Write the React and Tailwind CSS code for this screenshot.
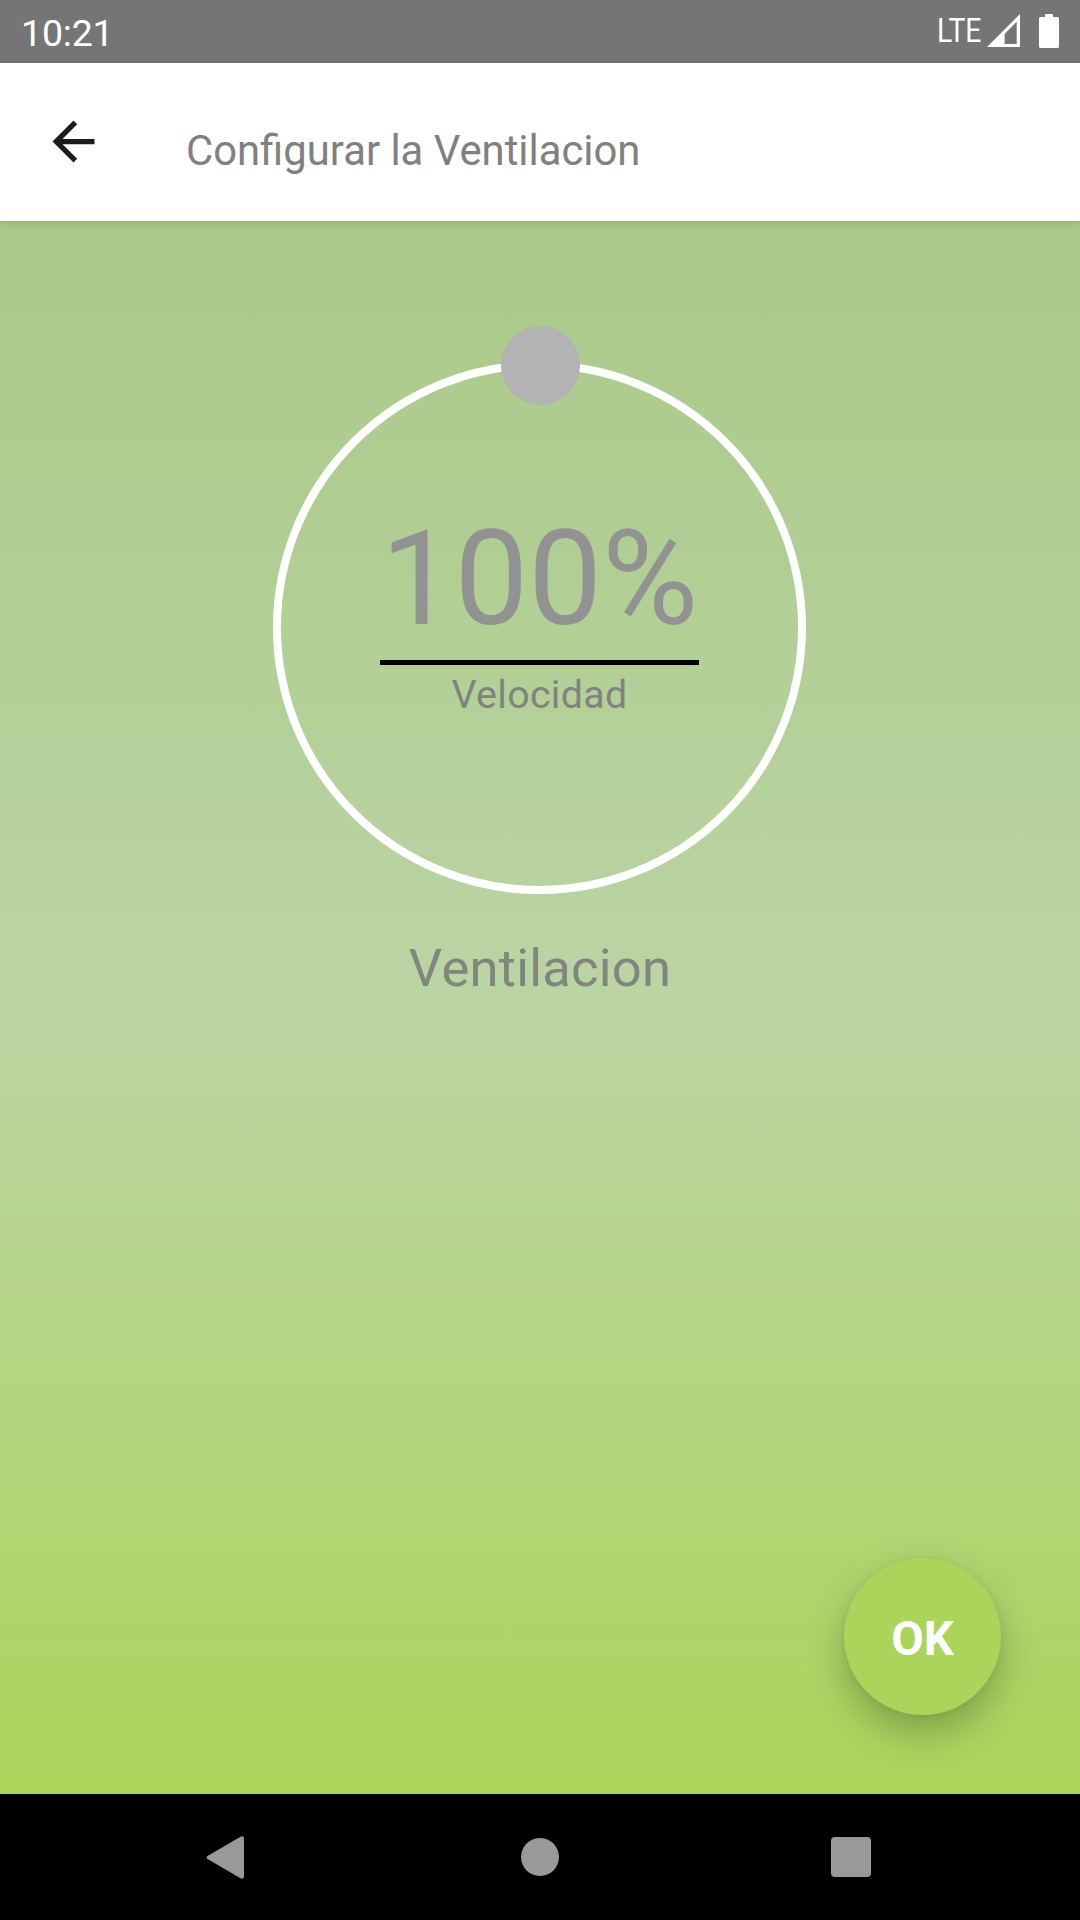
function SignalIcon() {
  return (
    <svg className="block h-[33px] w-[33px]" viewBox="0 0 33 33" fill="white">
      <path fillRule="evenodd" d="M33 0V33H0ZM29.7 7.8L17.6 20V30H29.7Z" />
    </svg>
  );
}

function BatteryIcon() {
  return (
    <svg className="block h-[34px] w-5" viewBox="0 0 20 34" fill="white">
      <path d="M6 1Q6 0 7 0H13Q14 0 14 1V3H18.5Q20 3 20 4.5V32.5Q20 34 18.5 34H1.5Q0 34 0 32.5V4.5Q0 3 1.5 3H6Z" />
    </svg>
  );
}

function StatusBar() {
  return (
    <div className="flex h-[63px] shrink-0 items-start bg-[#757575] pr-[21px] pl-[21px] text-white">
      <span className="mt-[11px] text-[37.5px] leading-[44px] tracking-[-0.2px]">10:21</span>
      <span className="mt-[12px] ml-auto w-[43px] origin-left scale-x-[0.87] text-[32.5px] leading-[38px]">LTE</span>
      <div className="mt-[14px] ml-[7px] flex gap-[19px]">
        <SignalIcon />
        <BatteryIcon />
      </div>
    </div>
  );
}

function Header() {
  return (
    <header className="z-10 flex h-[158px] shrink-0 items-start bg-white shadow-[0_2px_8px_rgba(0,0,0,0.14)]">
      <button className="mt-[47px] ml-[42px]" aria-label="Back">
        <svg className="block h-[63px] w-[63px]" viewBox="0 0 24 24" fill="#1c1c1c">
          <path d="M20 11H7.83l5.59-5.59L12 4l-8 8 8 8 1.41-1.41L7.83 13H20v-2z" />
        </svg>
      </button>
      <h1 className="mt-[63px] ml-[81px] text-[41.8px] leading-[50px] whitespace-nowrap text-[#808080]">
        Configurar la Ventilacion
      </h1>
    </header>
  );
}

function SpeedDial() {
  return (
    <div className="relative mt-[140px] mr-px flex h-[533px] w-[533px] flex-col items-center rounded-full border-8 border-white">
      <div className="absolute top-[-43px] left-[219.5px] h-[79px] w-[79px] rounded-full bg-[#b3b3b3]" />
      <div className="mt-[133px] text-[131.25px] leading-[154px] text-[#929292]">100%</div>
      <div className="mt-[4px] h-[5px] w-[319px] bg-black" />
      <div className="mt-[7px] text-[39.4px] leading-[46px] tracking-[0.3px] text-[#7f847c]">Velocidad</div>
    </div>
  );
}

function NavBar() {
  return (
    <nav className="flex h-[126px] shrink-0 items-center justify-between bg-black pr-[209px] pl-[206px]">
      <svg className="block h-[43px] w-[39px]" viewBox="0 0 39 43" fill="#999999">
        <path d="M1.5 20L34.5 .7Q38 -.6 38 2.8V40.2Q38 43.6 34.5 42.3L1.5 23Q-.3 21.5 1.5 20Z" />
      </svg>
      <div className="ml-[4px] h-[38px] w-[38px] rounded-full bg-[#999999]" />
      <div className="h-10 w-10 rounded-[4px] bg-[#999999]" />
    </nav>
  );
}

export default function App() {
  return (
    <div className="flex h-[1920px] w-[1080px] flex-col overflow-hidden font-['Roboto',sans-serif]">
      <StatusBar />
      <Header />
      <main className="flex min-h-0 flex-1 flex-col items-center bg-[linear-gradient(to_bottom,#a9ca88_0%,#bbd4a4_50%,#abd55a_100%)]">
        <SpeedDial />
        <h2 className="mt-[43px] text-[52.5px] leading-[62px] tracking-[0.25px] text-[#80857d]">Ventilacion</h2>
        <button className="mt-auto mr-[79px] mb-[79px] flex h-[157px] w-[157px] items-center justify-center self-end rounded-full bg-[#abd55a] pt-[4px] text-[47.25px] leading-[56px] font-bold text-white shadow-[0_17px_38px_rgba(0,0,0,0.26),0_1px_6px_rgba(0,0,0,0.05)]">
          OK
        </button>
      </main>
      <NavBar />
    </div>
  );
}
